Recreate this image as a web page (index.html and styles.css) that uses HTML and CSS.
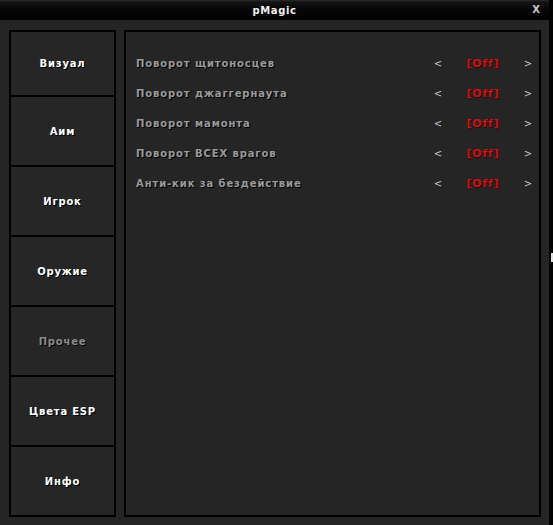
FILE: index.html
```html
<!DOCTYPE html>
<html>
<head>
<meta charset="utf-8">
<link rel="stylesheet" href="styles.css">
</head>
<body>
<div class="window">
  <div class="titlebar">
    <span class="title">pMagic</span>
    <span class="close">X</span>
  </div>
  <div class="content">
    <div class="tabs">
      <div class="tab first">Визуал</div>
      <div class="tab">Аим</div>
      <div class="tab">Игрок</div>
      <div class="tab">Оружие</div>
      <div class="tab inactive">Прочее</div>
      <div class="tab">Цвета ESP</div>
      <div class="tab">Инфо</div>
    </div>
    <div class="panel">
      <div class="row"><span class="label">Поворот щитоносцев</span><span class="arrow">&lt;</span><span class="value">[Off]</span><span class="arrow">&gt;</span></div>
      <div class="row"><span class="label">Поворот джаггернаута</span><span class="arrow">&lt;</span><span class="value">[Off]</span><span class="arrow">&gt;</span></div>
      <div class="row"><span class="label">Поворот мамонта</span><span class="arrow">&lt;</span><span class="value">[Off]</span><span class="arrow">&gt;</span></div>
      <div class="row"><span class="label">Поворот ВСЕХ врагов</span><span class="arrow">&lt;</span><span class="value">[Off]</span><span class="arrow">&gt;</span></div>
      <div class="row"><span class="label">Анти-кик за бездействие</span><span class="arrow">&lt;</span><span class="value">[Off]</span><span class="arrow">&gt;</span></div>
    </div>
  </div>
</div>
<div class="edge-mark"></div>
</body>
</html>
```

FILE: styles.css
```css
html, body {
  margin: 0;
  padding: 0;
  background: #000;
}
body {
  width: 553px;
  height: 525px;
  position: relative;
  overflow: hidden;
  font-family: "DejaVu Sans", Verdana, sans-serif;
  font-weight: bold;
  font-size: 10px;
}
.window {
  width: 549px;
  height: 525px;
  display: flex;
  flex-direction: column;
  background: #262626;
}
.titlebar {
  height: 20px;
  flex: none;
  background: linear-gradient(#2a2a2a 0, #141414 2px, #070707 8px, #000 20px);
  position: relative;
  display: flex;
  align-items: center;
  justify-content: center;
}
.title {
  color: #f0f0f0;
  font-size: 10px;
  letter-spacing: 0.6px;
  text-shadow: 1px 1px 0 #000;
}
.close {
  position: absolute;
  right: 9px;
  top: 4px;
  color: #c8c8c8;
  font-size: 10px;
}
.content {
  flex: 1;
  display: flex;
  align-items: flex-start;
  padding: 10px 8px 0 9px;
  gap: 8px;
  background: #252525;
}
.tabs {
  width: 103px;
  background: #000;
  padding: 2px;
  display: flex;
  flex-direction: column;
  gap: 2px;
}
.tab {
  height: 68px;
  background: #262626;
  color: #fff;
  display: flex;
  align-items: center;
  justify-content: center;
  letter-spacing: 0.8px;
  text-shadow: 1px 1px 0 #000;
}
.tab.first {
  height: 63px;
}
.tab.inactive {
  color: #8c8c8c;
}
.panel {
  box-sizing: border-box;
  width: 417px;
  height: 487px;
  border: 2px solid #000;
  background: #252525;
  padding: 26px 0 0 10px;
  display: flex;
  flex-direction: column;
}
.row {
  height: 30px;
  display: flex;
  align-items: flex-start;
  line-height: 12px;
}
.label {
  width: 297px;
  color: #9a9a9a;
  letter-spacing: 0.9px;
  text-shadow: 1px 1px 0 #000;
}
.arrow {
  color: #c4c4c4;
  font-weight: normal;
  width: 10px;
  text-align: center;
}
.value {
  width: 80px;
  text-align: center;
  color: #c41818;
  font-size: 11px;
  letter-spacing: 0.8px;
  text-shadow: 1px 1px 0 #3a0000;
}
.edge-mark {
  position: absolute;
  left: 551px;
  top: 253px;
  width: 2px;
  height: 9px;
  background: #e0e0e0;
}
```
